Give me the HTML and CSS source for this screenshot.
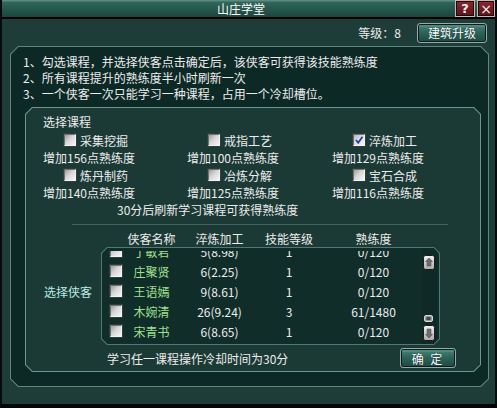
FILE: index.html
```html
<!DOCTYPE html>
<html lang="zh">
<head>
<meta charset="utf-8">
<title>山庄学堂</title>
<link rel="stylesheet" href="styles.css">
</head>
<body>
<div class="window">
  <div class="titlebar">
    <div class="title">山庄学堂</div>
    <div class="tb-btn help">?</div>
    <div class="tb-btn close">×</div>
  </div>
  <div class="topbar">
    <span class="level">等级：8</span>
    <span class="btn btn-upgrade">建筑升级</span>
  </div>
  <div class="frame main-frame">
    <div class="frame-inner main">
      <div class="tips">
        <p>1、勾选课程，并选择侠客点击确定后，该侠客可获得该技能熟练度</p>
        <p>2、所有课程提升的熟练度半小时刷新一次</p>
        <p>3、一个侠客一次只能学习一种课程，占用一个冷却槽位。</p>
      </div>
      <div class="frame course-frame">
        <div class="frame-inner course">
          <div class="course-title">选择课程</div>
          <div class="course-grid">
            <div class="opt"><span class="cb"></span><span>采集挖掘</span></div>
            <div class="opt"><span class="cb"></span><span>戒指工艺</span></div>
            <div class="opt"><span class="cb checked"><svg viewBox="0 0 10 10" width="10" height="10"><path d="M2 5 L4.2 7.8 L8.5 1.8" fill="none" stroke="#2b3f9c" stroke-width="1.8"/></svg></span><span>淬炼加工</span></div>
            <div class="gain">增加156点熟练度</div>
            <div class="gain">增加100点熟练度</div>
            <div class="gain">增加129点熟练度</div>
            <div class="opt"><span class="cb"></span><span>炼丹制药</span></div>
            <div class="opt"><span class="cb"></span><span>冶炼分解</span></div>
            <div class="opt"><span class="cb"></span><span>宝石合成</span></div>
            <div class="gain">增加140点熟练度</div>
            <div class="gain">增加125点熟练度</div>
            <div class="gain">增加116点熟练度</div>
          </div>
          <div class="note">30分后刷新学习课程可获得熟练度</div>
          <div class="sep"></div>
          <div class="heroes">
            <div class="hdr cols">
              <span></span><span>侠客名称</span><span>淬炼加工</span><span>技能等级</span><span></span><span>熟练度</span>
            </div>
            <div class="hero-label">选择侠客</div>
            <div class="frame list-frame">
              <div class="frame-inner list">
                <div class="rows">
                  <div class="rows-inner">
                    <div class="row cols"><span class="cell-cb"><span class="cb"></span></span><span class="name">丁敏君</span><span>5(8.98)</span><span>1</span><span></span><span>0/120</span></div>
                    <div class="row cols"><span class="cell-cb"><span class="cb"></span></span><span class="name">庄聚贤</span><span>6(2.25)</span><span>1</span><span></span><span>0/120</span></div>
                    <div class="row cols"><span class="cell-cb"><span class="cb"></span></span><span class="name">王语嫣</span><span>9(8.61)</span><span>1</span><span></span><span>0/120</span></div>
                    <div class="row cols"><span class="cell-cb"><span class="cb"></span></span><span class="name">木婉清</span><span>26(9.24)</span><span>3</span><span></span><span>61/1480</span></div>
                    <div class="row cols"><span class="cell-cb"><span class="cb"></span></span><span class="name">宋青书</span><span>6(8.65)</span><span>1</span><span></span><span>0/120</span></div>
                  </div>
                </div>
                <div class="scrollbar">
                  <span class="sb-btn"><svg viewBox="0 0 12 15" width="12" height="15"><defs><linearGradient id="g1" x1="0" y1="0" x2="0" y2="1"><stop offset="0" stop-color="#f2f2f2"/><stop offset="1" stop-color="#a9a9a9"/></linearGradient></defs><rect x="0.5" y="0.5" width="11" height="14" rx="2" fill="url(#g1)" stroke="#1a1a1a"/><path d="M6 3 L9.5 6.5 L8 6.5 L8 11 L4 11 L4 6.5 L2.5 6.5 Z" fill="#6d6d6d" stroke="#4a4a4a" stroke-width="0.5"/></svg></span>
                  <span class="sb-thumb"><svg viewBox="0 0 9 7" width="9" height="7"><rect x="0.5" y="0.5" width="8" height="6" rx="1.5" fill="#9a9a9a" stroke="#d8d8d8"/><rect x="2.5" y="2" width="4" height="3" fill="#3a4a48"/></svg></span>
                  <span class="sb-btn down"><svg viewBox="0 0 12 16" width="12" height="16"><rect x="0.5" y="0.5" width="11" height="15" rx="2" fill="url(#g1)" stroke="#1a1a1a"/><path d="M6 13 L9.5 9.5 L8 9.5 L8 4 L4 4 L4 9.5 L2.5 9.5 Z" fill="#6d6d6d" stroke="#4a4a4a" stroke-width="0.5"/></svg></span>
                </div>
              </div>
            </div>
            <div class="footer">
              <span class="footer-text">学习任一课程操作冷却时间为30分</span>
              <span class="btn btn-ok">确 定</span>
            </div>
          </div>
        </div>
      </div>
    </div>
  </div>
</div>
</body>
</html>
```

FILE: styles.css
```css
* { box-sizing: border-box; }
html, body { margin: 0; padding: 0; background: #000; }
body {
  font-family: "Noto Sans CJK SC", "Liberation Sans", sans-serif;
  font-size: 12px;
  color: #ececec;
}
p { margin: 0; }

.window {
  width: 497px;
  height: 408px;
  background: #1f3d38;
  border-left: 2px solid #050c0b;
  border-right: 2px solid #050c0b;
  border-bottom: 4px solid #020605;
  display: flex;
  flex-direction: column;
  overflow: hidden;
}

/* title bar */
.titlebar {
  height: 19px;
  flex: none;
  display: flex;
  border-bottom: 2px solid #000;
  background: linear-gradient(#5a8a80 0, #5a8a80 1px, #33665b 2px, #275a4f 8px, #1b463d 17px);
}
.title {
  flex: 1;
  text-align: center;
  padding-left: 25px;
  line-height: 17px;
  color: #ffffff;
}
.tb-btn {
  height: 17px;
  display: flex;
  align-items: center;
  justify-content: center;
  color: #f4eeee;
  font-family: "DejaVu Sans", sans-serif;
  font-weight: bold;
  font-size: 13px;
  background: linear-gradient(#8a2a30, #5a1219);
  border: 1px solid #c4b8b8;
  box-shadow: inset 0 0 0 1px #2a0508;
}
.tb-btn.help { width: 20px; margin-right: 2px; }
.tb-btn.close { width: 18px; font-weight: normal; font-size: 14px; }

/* top bar */
.topbar {
  height: 27px;
  flex: none;
  display: flex;
  justify-content: flex-end;
  align-items: center;
  padding-right: 8px;
  gap: 16px;
}
.level { color: #ececec; }

.btn {
  display: flex;
  align-items: center;
  justify-content: center;
  height: 20px;
  color: #ffffff;
  border: 1px solid #95aba6;
  border-radius: 3px;
  box-shadow: inset 0 0 0 1px #0b1d1a, inset 0 2px 0 1px #4f8a80;
  background: linear-gradient(#4a867c, #2c6258 50%, #1c4b43);
  text-shadow: 0 0 1px #0a1a18;
}
.btn-upgrade { width: 70px; }
.btn-ok { width: 56px; letter-spacing: 2px; }

/* chamfered frames */
.frame {
  padding: 1px;
  clip-path: polygon(var(--c) 0, calc(100% - var(--c)) 0, 100% var(--c), 100% calc(100% - var(--c)), calc(100% - var(--c)) 100%, var(--c) 100%, 0 calc(100% - var(--c)), 0 var(--c));
}
.frame-inner {
  height: 100%;
  clip-path: polygon(calc(var(--c) - 0.5px) 0, calc(100% - var(--c) + 0.5px) 0, 100% calc(var(--c) - 0.5px), 100% calc(100% - var(--c) + 0.5px), calc(100% - var(--c) + 0.5px) 100%, calc(var(--c) - 0.5px) 100%, 0 calc(100% - var(--c) + 0.5px), 0 calc(var(--c) - 0.5px));
}

.main-frame {
  --c: 8px;
  flex: none;
  height: 341px;
  margin: 0 6px 0 8px;
  background: #5b877f;
}
.main {
  background: #0d2926;
  padding: 7px 7px 0 12px;
}
.tips p { line-height: 16px; white-space: nowrap; }

.course-frame {
  --c: 7px;
  height: 265px;
  margin: 5px 0 0 2px;
  background: #6a978f;
}
.course {
  background: #1c3a35;
  padding-top: 5px;
}
.course-title {
  line-height: 18px;
  padding-left: 17px;
}
.course-grid {
  display: grid;
  grid-template-columns: 144px 145px 1fr;
  grid-template-rows: 18px 17px 18px 17px;
  padding-left: 17px;
  align-items: center;
}
.opt {
  display: flex;
  align-items: center;
  padding-left: 21px;
  gap: 4px;
}
.gain { white-space: nowrap; }

.cb {
  display: inline-flex;
  align-items: center;
  justify-content: center;
  width: 12px;
  height: 12px;
  border: 1px solid;
  border-color: #707070 #f2f2f2 #f2f2f2 #707070;
  background: linear-gradient(135deg, #9c9c9c 0%, #d6d6d6 45%, #f6f6f6 100%);
  box-shadow: 0 0 0 1px #2e3e3b;
}
.cb.checked { background: linear-gradient(135deg, #b0b4c4 0%, #dcdde6 45%, #f6f6f6 100%); }

.note {
  line-height: 18px;
  padding-left: 91px;
}
.sep {
  height: 1px;
  margin: 5px 0 0 46px;
  width: 376px;
  background: #41625c;
}

.heroes {
  display: grid;
  grid-template-columns: 75px 355px;
  grid-template-rows: 16px 98px 23px;
  margin-top: 6px;
}
.cols {
  display: grid;
  grid-template-columns: 24px 51px 85px 54px 15px 85px;
  align-items: center;
  text-align: center;
  white-space: nowrap;
}
.hdr {
  grid-column: 2;
  grid-row: 1;
  line-height: 16px;
  padding-left: 1px;
}
.hero-label {
  grid-column: 1;
  grid-row: 2;
  padding-left: 18px;
  margin-top: 37px;
  line-height: 16px;
  color: #b4ece6;
}
.list-frame {
  --c: 6px;
  grid-column: 2;
  grid-row: 2;
  width: 339px;
  height: 98px;
  background: #4f7a73;
}
.list {
  background: #112d2a;
  display: flex;
}
.rows {
  flex: 1;
  overflow: hidden;
  margin-top: 3px;
}
.rows-inner { margin-top: -10px; }
.row { height: 20px; }
.cell-cb {
  display: flex;
  justify-content: flex-start;
  padding-left: 8px;
}
.name { color: #9fe08c; }

.scrollbar {
  width: 15px;
  margin-right: 2px;
  background: #0f2926;
  display: flex;
  flex-direction: column;
  align-items: flex-start;
  padding-top: 7px;
}
.sb-btn { display: block; height: 15px; margin-left: 1px; }
.sb-btn.down { height: 16px; margin-top: 3px; }
.sb-btn svg, .sb-thumb svg { display: block; }
.sb-thumb { display: block; margin: 45px 0 0 2px; height: 7px; }

.footer {
  grid-column: 2;
  grid-row: 3;
  margin-top: 3px;
  height: 20px;
  display: flex;
  justify-content: space-between;
  align-items: center;
  padding-left: 6px;
}
```
